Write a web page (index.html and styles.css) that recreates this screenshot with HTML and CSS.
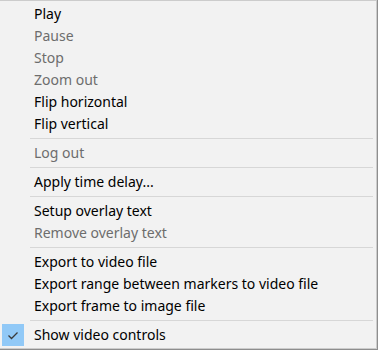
FILE: index.html
```html
<!DOCTYPE html>
<html>
<head>
<meta charset="utf-8">
<link rel="stylesheet" href="styles.css">
</head>
<body>
<div class="menu">
  <div class="item">Play</div>
  <div class="item disabled">Pause</div>
  <div class="item disabled">Stop</div>
  <div class="item disabled">Zoom out</div>
  <div class="item">Flip horizontal</div>
  <div class="item">Flip vertical</div>
  <div class="sep"></div>
  <div class="item disabled">Log out</div>
  <div class="sep"></div>
  <div class="item">Apply time delay...</div>
  <div class="sep"></div>
  <div class="item">Setup overlay text</div>
  <div class="item disabled">Remove overlay text</div>
  <div class="sep"></div>
  <div class="item">Export to video file</div>
  <div class="item">Export range between markers to video file</div>
  <div class="item">Export frame to image file</div>
  <div class="sep"></div>
  <div class="item checked">
    <span class="check"><svg width="22" height="22" viewBox="0 0 22 22"><path d="M6.5 11.5 L9.5 14.5 L15.5 8.5" fill="none" stroke="#3a3a3a" stroke-width="1.3"/></svg></span>
    Show video controls
  </div>
</div>
</body>
</html>
```
FILE: styles.css
```css
html, body {
  margin: 0;
  padding: 0;
}
body {
  width: 378px;
  height: 350px;
  background: #8e8e8e;
  overflow: hidden;
}
.menu {
  width: 377px;
  height: 349px;
  background: #f2f2f2;
  border-top: 1px solid #cccccc;
  border-right: 1px solid #cccccc;
  border-bottom: 1px solid #cccccc;
  padding-top: 2px;
  box-sizing: border-box;
  font-family: "Noto Sans", sans-serif;
  font-size: 14px;
  color: #000;
}
.item {
  position: relative;
  height: 22px;
  line-height: 22px;
  padding-left: 34px;
  white-space: nowrap;
}
.disabled {
  color: #6d6d6d;
}
.sep {
  height: 1px;
  background: #d7d7d7;
  margin: 3px 3px 3px 30px;
}
.check {
  position: absolute;
  left: 2px;
  top: 0;
  width: 22px;
  height: 22px;
  background: #91c9f7;
}
.check svg {
  display: block;
}
```
